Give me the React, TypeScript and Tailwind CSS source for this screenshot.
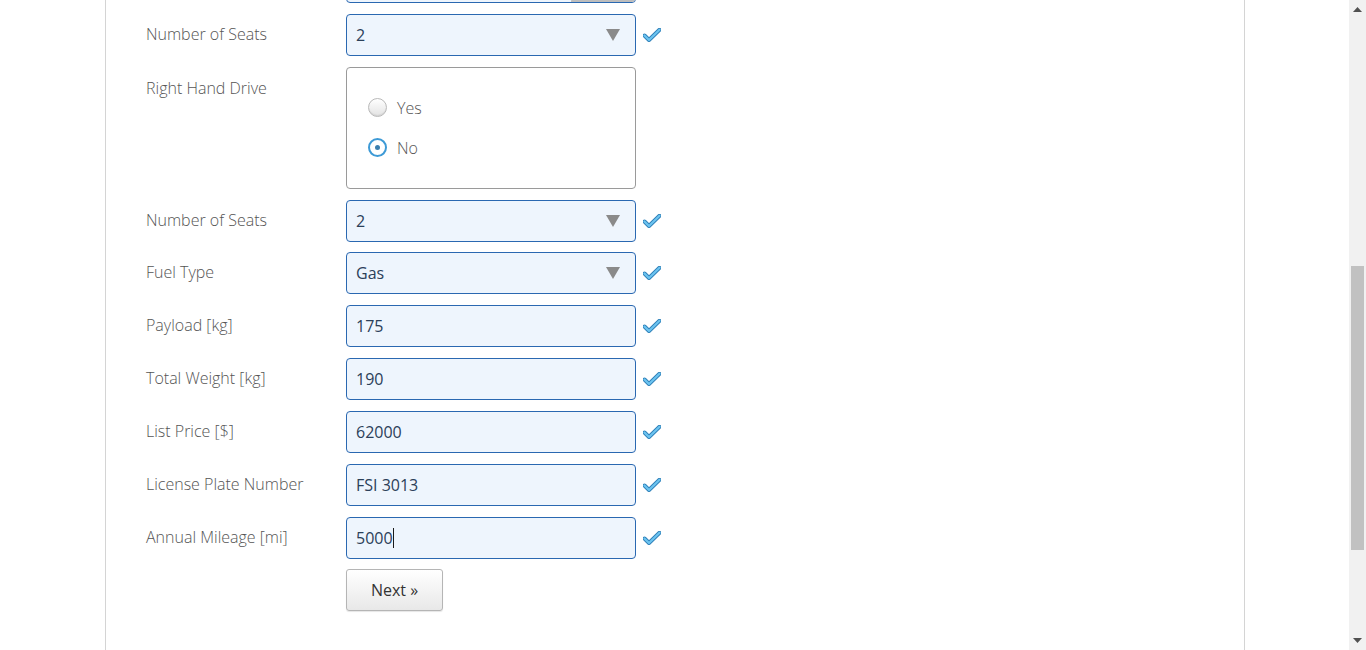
import React from "react";

// Vehicle details form (scrolled view) with a drawn scrollbar

const font = { fontFamily: '"Open Sans", "Liberation Sans", sans-serif' };

function Check() {
  return (
    <svg width="18" height="14" viewBox="0 0 18 14" className="ml-[7px] shrink-0">
      <path
        d="M1.5 7.5 L6 12 L16.5 1.8"
        fill="none"
        stroke="#2e7fb8"
        strokeWidth="4"
        strokeLinecap="round"
        strokeLinejoin="round"
      />
      <path
        d="M1.5 7.5 L6 12 L16.5 1.8"
        fill="none"
        stroke="#6cc4f0"
        strokeWidth="2.2"
        strokeLinecap="round"
        strokeLinejoin="round"
      />
    </svg>
  );
}

function Caret() {
  return (
    <svg width="14" height="12" viewBox="0 0 14 12" className="absolute right-[15px] top-[14px]">
      <path d="M0 0 H14 L7 12 Z" fill="#8a8a8a" />
    </svg>
  );
}

interface FieldProps {
  label: string;
  value: string;
  select?: boolean;
  caret?: boolean;
}

function Field({ label, value, select, caret }: FieldProps) {
  return (
    <div className="flex">
      <div className="w-[240px] shrink-0 whitespace-nowrap pl-[40px] pt-[9px] leading-[22px] text-[16px] font-light text-[#555]">
        {label}
      </div>
      <div className="flex items-center">
        <div className="relative w-[290px] h-[42px] rounded-[4px] border border-[#2a68b1] bg-[#eef5fd] pl-[9px] flex items-center text-[16px] text-[#2b4059]">
          <span>{value}</span>
          {caret && <span className="inline-block w-px h-[20px] bg-[#1a1a1a]"></span>}
          {select && <Caret />}
        </div>
        <Check />
      </div>
    </div>
  );
}

function Radio({ label, checked }: { label: string; checked?: boolean }) {
  return (
    <div className="flex items-center h-[22px]">
      {checked ? (
        <span className="w-[19px] h-[19px] rounded-full border-2 border-[#3d9ad6] bg-white flex items-center justify-center">
          <span className="w-[5px] h-[5px] rounded-full bg-[#3b7fae]"></span>
        </span>
      ) : (
        <span className="w-[19px] h-[19px] rounded-full border border-[#b9b9b9] bg-gradient-to-b from-[#ffffff] to-[#e3e3e3] shadow-[inset_0_-1px_1px_rgba(0,0,0,0.08)]"></span>
      )}
      <span className="ml-[10px] text-[16px] font-light text-[#555]">{label}</span>
    </div>
  );
}

export default function App() {
  return (
    <div className="relative h-[650px] w-[1366px] overflow-hidden bg-white" style={font}>
      <div className="flex h-full">
        <div className="w-[105px] shrink-0"></div>
        {/* Page panel */}
        <div className="w-[1140px] shrink-0 border-x border-[#d4d4d4] h-full">
          <div className="flex flex-col gap-[10.85px] mt-[-39px]">
            {/* partially scrolled-off field */}
            <div className="flex">
              <div className="w-[240px] shrink-0"></div>
              <div className="w-[290px] h-[42px] rounded-[4px] border border-[#2a68b1] bg-[#eef5fd] flex justify-end overflow-hidden">
                <div className="w-[64px] h-full bg-gradient-to-b from-[#f7f7f7] to-[#e6e6e6] border-l border-[#c8c8c8] border-b-2 border-b-[#bdbdbd]"></div>
              </div>
            </div>
            <Field label="Number of Seats" value="2" select />
            <div className="flex">
              <div className="w-[240px] shrink-0 whitespace-nowrap pl-[40px] pt-[10px] leading-[22px] text-[16px] font-light text-[#555]">
                Right Hand Drive
              </div>
              <div className="w-[290px] h-[122px] rounded-[4px] border border-[#9a9a9a] bg-white pl-[21px] pt-[29px] flex flex-col gap-[18px]">
                <Radio label="Yes" />
                <Radio label="No" checked />
              </div>
            </div>
            <Field label="Number of Seats" value="2" select />
            <Field label="Fuel Type" value="Gas" select />
            <Field label="Payload [kg]" value="175" />
            <Field label="Total Weight [kg]" value="190" />
            <Field label="List Price [$]" value="62000" />
            <Field label="License Plate Number" value="FSI 3013" />
            <Field label="Annual Mileage [mi]" value="5000" caret />
            <div className="flex">
              <div className="w-[240px] shrink-0"></div>
              <button className="w-[97px] h-[42px] rounded-[3px] border border-[#b5b5b5] bg-gradient-to-b from-[#ffffff] to-[#e8e8e8] text-[16px] text-[#333] shadow-[0_1px_1px_rgba(0,0,0,0.1)]">
                Next »
              </button>
            </div>
          </div>
        </div>
        <div className="flex-1"></div>
        {/* Scrollbar */}
        <div className="w-[17px] shrink-0 h-full bg-[#f1f1f1] flex flex-col items-center">
          <svg width="9" height="5" viewBox="0 0 9 5" className="mt-[7px]">
            <path d="M0 5 L4.5 0 L9 5 Z" fill="#505050" />
          </svg>
          <div className="w-[13px] h-[284px] bg-[#c1c1c1] mt-[254px]"></div>
          <div className="flex-1"></div>
          <svg width="9" height="5" viewBox="0 0 9 5" className="mb-[7px]">
            <path d="M0 0 L9 0 L4.5 5 Z" fill="#505050" />
          </svg>
        </div>
      </div>
    </div>
  );
}
